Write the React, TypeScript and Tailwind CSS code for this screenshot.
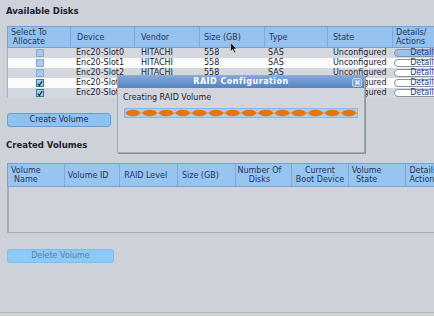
import React from "react";

const disks = [
  { dev: "Enc20-Slot0", checked: false, white: false, active: true },
  { dev: "Enc20-Slot1", checked: false, white: true, active: false },
  { dev: "Enc20-Slot2", checked: false, white: false, active: false },
  { dev: "Enc20-Slot3", checked: true, white: true, active: false },
  { dev: "Enc20-Slot4", checked: true, white: false, active: false },
];

function Check({ checked }: { checked: boolean }) {
  return (
    <div
      className={
        checked
          ? "w-[8px] h-[8px] bg-[#a6c8ee] border border-[#2f7f8c] flex items-center justify-center"
          : "w-[8px] h-[8px] bg-[#a9c9ef] border border-[#86a9d3]"
      }
    >
      {checked && (
        <svg width="7" height="7" viewBox="0 0 7 7">
          <path d="M1 3.8 L2.8 5.8 L6 0.8" stroke="#10243f" strokeWidth="1.4" fill="none" />
        </svg>
      )}
    </div>
  );
}

export default function App() {
  const w1 = ["w-[63px]", "w-[64px]", "w-[65px]", "w-[65px]", "w-[63px]", "w-[65px]", "w-[68px]"];
  return (
    <div className="relative w-[434px] h-[316px] overflow-hidden bg-[#cdd1d8] font-['DejaVu_Sans',sans-serif] text-[#1f2330] flex flex-col">
      <div className="flex flex-col pl-[7px] pt-[5px]">
        <div className="text-[8.5px] leading-[12px] font-bold text-[#1c2030] -ml-[1px]">Available Disks</div>

        {/* Table 1 */}
        <div className="mt-[9px] w-[460px] flex flex-col">
          <div className="flex h-[22px] bg-[#95c1ef] border border-[#74a2d6] text-[8px] leading-[9px] text-[#23355a]">
            <div className={`${w1[0]} border-r border-[#7eaadb] flex items-center pl-[3px]`}>
              <div className="text-center">
                Select To<br />Allocate
              </div>
            </div>
            <div className={`${w1[1]} border-r border-[#7eaadb] flex items-center pl-[6px]`}>Device</div>
            <div className={`${w1[2]} border-r border-[#7eaadb] flex items-center pl-[6px]`}>Vendor</div>
            <div className={`${w1[3]} border-r border-[#7eaadb] flex items-center pl-[4px]`}>Size (GB)</div>
            <div className={`${w1[4]} border-r border-[#7eaadb] flex items-center pl-[4px]`}>Type</div>
            <div className={`${w1[5]} border-r border-[#7eaadb] flex items-center pl-[5px]`}>State</div>
            <div className={`${w1[6]} flex items-center pl-[3px]`}>
              Details/<br />Actions
            </div>
          </div>
          {disks.map((d) => (
            <div
              key={d.dev}
              className={`flex h-[10px] text-[8px] leading-[10px] border-l border-[#a9b0c0] ${
                d.white ? "bg-[#fbfbfc]" : "bg-[#d3d7de]"
              }`}
            >
              <div className={`${w1[0]} flex items-center justify-center`}>
                <Check checked={d.checked} />
              </div>
              <div className={`${w1[1]} pl-[5px]`}>{d.dev}</div>
              <div className={`${w1[2]} pl-[6px]`}>HITACHI</div>
              <div className={`${w1[3]} pl-[4px]`}>558</div>
              <div className={`${w1[4]} pl-[3px]`}>SAS</div>
              <div className={`${w1[5]} pl-[5px]`}>Unconfigured</div>
              <div className={`${w1[6]} flex items-center pl-[1px]`}>
                <div
                  className={`w-[60px] h-[8px] rounded-[4px] border border-[#8a919c] flex items-center justify-center text-[#1d3f8f] text-[8px] leading-[8px] ${
                    d.active ? "bg-[#98c3ee]" : "bg-white"
                  }`}
                >
                  Details
                </div>
              </div>
            </div>
          ))}
        </div>

        <div className="mt-[15px] w-[104px] h-[14px] rounded-[3px] bg-[#8ec3f1] border border-[#6b9dd0] flex items-center justify-center text-[8px] leading-[10px] text-[#1f2a40]">
          Create Volume
        </div>

        <div className="mt-[12px] text-[8.5px] leading-[12px] font-bold text-[#1c2030] -ml-[1px]">Created Volumes</div>

        {/* Table 2 */}
        <div className="mt-[12px] w-[460px] flex flex-col">
          <div className="flex h-[24px] bg-[#98c4f0] border border-[#74a2d6] text-[8px] leading-[9px] text-[#23355a]">
            <div className="w-[57px] border-r border-[#7eaadb] flex items-center pl-[3px]">
              <div className="text-center">
                Volume<br />Name
              </div>
            </div>
            <div className="w-[56px] border-r border-[#7eaadb] flex items-center pl-[3px]">Volume ID</div>
            <div className="w-[58px] border-r border-[#7eaadb] flex items-center pl-[4px]">RAID Level</div>
            <div className="w-[58px] border-r border-[#7eaadb] flex items-center pl-[4px]">Size (GB)</div>
            <div className="w-[57px] border-r border-[#7eaadb] flex items-center pl-[2px]">
              <div className="text-center">
                Number Of<br />Disks
              </div>
            </div>
            <div className="w-[57px] border-r border-[#7eaadb] flex items-center justify-center">
              <div className="text-center">
                Current<br />Boot Device
              </div>
            </div>
            <div className="w-[58px] border-r border-[#7eaadb] flex items-center pl-[3px]">
              <div className="text-center">
                Volume<br />State
              </div>
            </div>
            <div className="w-[60px] flex items-center pl-[3px]">
              Details/<br />Actions
            </div>
          </div>
          <div className="h-[46px] bg-[#d0d4da] border-l-2 border-b border-[#a5abbd]"></div>
        </div>

        <div className="mt-[16px] w-[107px] h-[14px] rounded-[3px] bg-[#8ccaf9] border border-[#80bbea] flex items-center justify-center text-[8px] leading-[10px] text-[#5d7fa6]">
          Delete Volume
        </div>
      </div>

      <div className="mt-auto h-[4px] border-t border-[#b3b8b6] bg-[#d0d4d2]"></div>

      {/* Dialog */}
      <div className="absolute left-[117px] top-[75px] w-[248px] h-[78px] bg-[#d2d5db] border border-[#a4aab5] shadow-[1px_1px_0_#8b919b] flex flex-col">
        <div className="h-[12px] bg-gradient-to-b from-[#80a8dc] to-[#5582c0] flex items-center relative">
          <div className="flex-1 text-center text-white font-bold text-[8px] leading-[10px] tracking-[0.5px]">
            RAID Configuration
          </div>
          <div className="absolute right-[2px] top-[1.5px] w-[10px] h-[9px] rounded-[2px] bg-[#7ea8dd] border border-[#c4d7ef] flex items-center justify-center">
            <svg width="5" height="5" viewBox="0 0 5 5">
              <path d="M0.5 0.5 L4.5 4.5 M4.5 0.5 L0.5 4.5" stroke="white" strokeWidth="1.1" />
            </svg>
          </div>
        </div>
        <div className="pl-[5px] pt-[5px] text-[8px] leading-[10px] text-[#1f2330]">Creating RAID Volume</div>
        <div className="ml-[6px] mt-[5px] w-[234px] h-[10px] bg-[#a8cdee] border border-[#8fb6df] overflow-hidden">
          <svg width="232" height="8" viewBox="0 0 232 8" className="block">
            <line x1="0" y1="4" x2="232" y2="4" stroke="#e88a2a" strokeWidth="1.2" />
            {Array.from({ length: 14 }).map((_, i) => (
              <ellipse key={i} cx={8 + i * 16.6} cy="4" rx="7" ry="3.3" fill="#e07610" />
            ))}
          </svg>
        </div>
      </div>

      {/* Mouse cursor */}
      <svg className="absolute left-[230px] top-[42px]" width="8" height="12" viewBox="0 0 8 12">
        <path d="M0.5 0.5 L0.5 9.5 L2.6 7.4 L4.2 11 L5.6 10.4 L4.1 6.9 L7 6.9 Z" fill="#111" stroke="#eee" strokeWidth="0.6" />
      </svg>
    </div>
  );
}
